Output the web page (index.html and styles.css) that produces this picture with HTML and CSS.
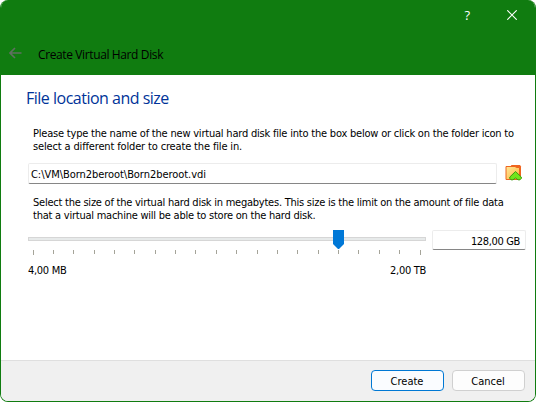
FILE: index.html
```html
<!DOCTYPE html>
<html lang="en">
<head>
<meta charset="utf-8">
<title>Create Virtual Hard Disk</title>
<link rel="stylesheet" href="styles.css">
</head>
<body>
<main class="window">
  <header class="titlebar">
    <div class="controls">
      <span class="help">?</span>
      <svg class="close" width="10" height="10" viewBox="0 0 10 10"><path d="M.3.3l9.4 9.4M9.7.3L.3 9.7" stroke="#fff" stroke-width="1.1"/></svg>
    </div>
    <div class="caption">
      <svg class="back" width="13" height="12" viewBox="0 0 13 12"><path d="M12.5 6H1M6 1L1 6l5 5" fill="none" stroke="#5f6f60" stroke-width="1.6"/></svg>
      <span class="name">Create Virtual Hard Disk</span>
    </div>
  </header>
  <section class="content">
    <h1>File location and size</h1>
    <p class="hint"><span class="tight">Please type the name of the new virtual hard disk file into the box below or click on the folder icon to</span><br><span class="snug">select a different folder to create the file in.</span></p>
    <div class="file-row">
      <div class="field path">C:\VM\Born2beroot\Born2beroot.vdi</div>
      <svg class="folder" width="18" height="17" viewBox="0 0 18 17">
        <defs><linearGradient id="f" x1="0" y1="0" x2="1" y2="1"><stop offset="0" stop-color="#ffe79a"/><stop offset="1" stop-color="#ffb638"/></linearGradient></defs>
        <path d="M5 3L6.500 1H15L16 2.500V15H5z" fill="#f0641e"/>
        <path d="M1 2.500H10L11.500 3.500H14.500V15.500H1z" fill="url(#f)" stroke="#ed651f"/>
        <path d="M10.500 7.500L16.300 13V14.500L15 15.800H13L10.500 14 8 15.800H6L4.800 14.500V13z" fill="#71e51c" stroke="#3b9a10"/>
      </svg>
    </div>
    <p class="hint size-hint"><span class="tighter">Select the size of the virtual hard disk in megabytes. This size is the limit on the amount of file data</span><br><span class="tighter">that a virtual machine will be able to store on the hard disk.</span></p>
    <div class="size-row">
      <svg class="slider" width="398" height="26" viewBox="0 0 398 26" shape-rendering="crispEdges">
        <rect x=".5" y="7.500" width="397" height="3" fill="#e7eaea" stroke="#d6d6d6"/>
        <path d="M5.500 20v5M25.500 20v4M45.500 20v4M66.500 20v4M86.500 20v4M106.500 20v4M127.500 20v4M147.500 20v4M167.500 20v4M188.500 20v4M208.500 20v4M229.500 20v4M249.500 20v4M269.500 20v4M290.500 20v4M310.500 20v4M330.500 20v4M351.500 20v4M371.500 20v4M392.500 20v5" stroke="#a5a499"/>
        <path d="M305 0h11v14l-5 5h-1l-5-5z" fill="#0078d7" shape-rendering="auto"/>
      </svg>
      <div class="field amount">128,00 GB</div>
    </div>
    <div class="range"><span>4,00 MB</span><span>2,00 TB</span></div>
  </section>
  <footer class="footer">
    <button class="btn primary">Create</button>
    <button class="btn">Cancel</button>
  </footer>
</main>
</body>
</html>
```

FILE: styles.css
```css
* { box-sizing: border-box; }
body { margin: 0; background: #fff; overflow: hidden; }
.window {
  width: 536px; height: 402px; overflow: hidden;
  display: flex; flex-direction: column;
  border: 1px solid #107c10; border-top: 0; border-radius: 8px;
  background: #fff; color: #000;
  font: 11px/13px "DejaVu Sans Condensed", "DejaVu Sans", sans-serif;
  font-stretch: condensed;
}
.titlebar { height: 75px; background: #107c10; font-family: "Open Sans", sans-serif; font-stretch: normal; }
.controls { height: 30px; display: flex; align-items: center; justify-content: flex-end; padding-right: 18px; color: #fff; }
.help { font-size: 13px; margin-right: 37px; }
.caption { height: 45px; display: flex; align-items: center; padding: 5px 0 0 8px; }
.back { margin-top: -4px; }
.name { margin-left: 16px; font-size: 12px; line-height: 16px; letter-spacing: -.38px; }
.content { flex: 1; padding: 13px 9px 0 27px; }
h1 { margin: 0 0 19px -2px; font: 400 16px/20px "Open Sans", sans-serif; letter-spacing: -.5px; color: #003399; white-space: nowrap; }
.hint { margin: 0; padding-left: 5px; height: 26px; white-space: nowrap; }
.tight { letter-spacing: -.205px; }
.tighter { letter-spacing: -.237px; }
.snug { letter-spacing: -.15px; }
.file-row { display: flex; height: 21px; margin-top: 10px; }
.field { height: 20px; border: 1px solid #ececec; border-bottom-color: #868686; border-radius: 2px; line-height: 20px; white-space: nowrap; }
.path { width: 469px; padding-left: 2px; height: 21px; line-height: 21px; letter-spacing: -.05px; }
.folder { margin: 1px 0 0 8px; }
.size-hint { margin-top: 12px; }
.size-row { display: flex; margin-top: 8px; height: 26px; justify-content: space-between; }
.amount { width: 94px; text-align: right; padding-right: 5px; line-height: 21px; letter-spacing: -.35px; }
.range { display: flex; justify-content: space-between; width: 398px; margin-top: 8px; letter-spacing: -.3px; }
.footer { height: 41px; background: #f0f0f0; border-top: 1px solid #dfdfdf; display: flex; justify-content: flex-end; gap: 8px; padding: 9px 10px 0 0; }
.btn { width: 73px; height: 21px; padding: 1px 1px 0 0; border: 1px solid #d0d0d0; border-radius: 4px; background: #fdfdfd; color: #000; font: inherit; line-height: 19px; }
.primary { border-color: #0078d4; background: #fafcff; }
```
